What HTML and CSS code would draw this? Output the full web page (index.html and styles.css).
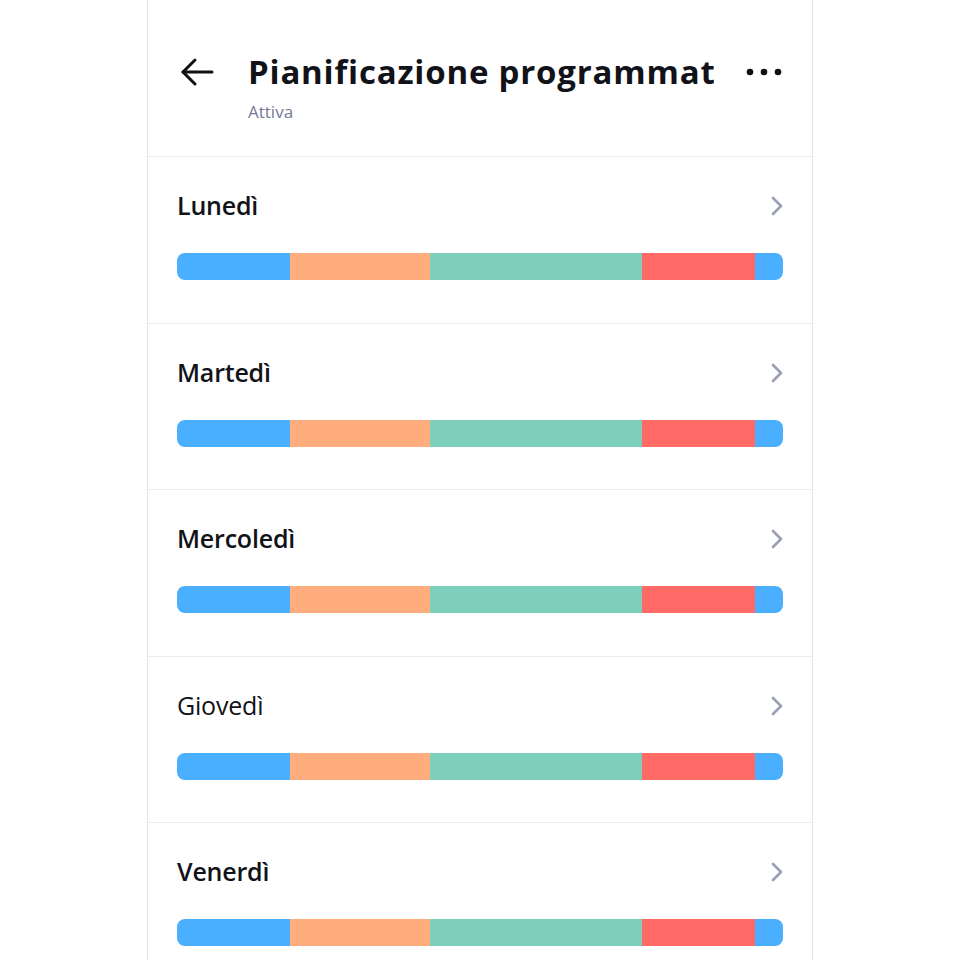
FILE: index.html
```html
<!DOCTYPE html>
<html lang="it">

<head>
  <meta charset="UTF-8">
  <meta name="viewport" content="width=device-width, initial-scale=1.0">
  <title>Pianificazione programmata</title>
  <link rel="stylesheet" href="styles.css">
</head>

<body>
  <div class="panel">
    <div class="header">
      <button class="icon-button back" aria-label="Indietro">
        <svg width="34" height="30" viewBox="0 0 34 30" fill="none" stroke="#111" stroke-width="3" stroke-linecap="round" stroke-linejoin="round">
          <path d="M32 15H3"/>
          <path d="M15 3L3 15l12 12"/>
        </svg>
      </button>
      <div class="title-block">
        <h1 class="title">Pianificazione programmata</h1>
        <div class="status">Attiva</div>
      </div>
      <button class="icon-button more" aria-label="Altro">
        <svg width="36" height="8" viewBox="0 0 36 8" fill="#111">
          <circle cx="4" cy="4" r="3.3"/>
          <circle cx="18" cy="4" r="3.3"/>
          <circle cx="32" cy="4" r="3.3"/>
        </svg>
      </button>
    </div>

    <ul class="day-list">
      <li class="day">
        <div class="day-top">
          <span class="day-name">Lunedì</span>
          <svg class="chevron" width="14" height="22" viewBox="0 0 14 22" fill="none" stroke="#9aa0b4" stroke-width="2.6" stroke-linecap="round" stroke-linejoin="round"><path d="M3 3l8 8-8 8"/></svg>
        </div>
        <div class="bar">
          <span class="seg blue" style="width: 113px"></span>
          <span class="seg orange" style="width: 140px"></span>
          <span class="seg teal" style="width: 212px"></span>
          <span class="seg red" style="width: 113px"></span>
          <span class="seg blue rest"></span>
        </div>
      </li>
      <li class="day">
        <div class="day-top">
          <span class="day-name">Martedì</span>
          <svg class="chevron" width="14" height="22" viewBox="0 0 14 22" fill="none" stroke="#9aa0b4" stroke-width="2.6" stroke-linecap="round" stroke-linejoin="round"><path d="M3 3l8 8-8 8"/></svg>
        </div>
        <div class="bar">
          <span class="seg blue" style="width: 113px"></span>
          <span class="seg orange" style="width: 140px"></span>
          <span class="seg teal" style="width: 212px"></span>
          <span class="seg red" style="width: 113px"></span>
          <span class="seg blue rest"></span>
        </div>
      </li>
      <li class="day">
        <div class="day-top">
          <span class="day-name">Mercoledì</span>
          <svg class="chevron" width="14" height="22" viewBox="0 0 14 22" fill="none" stroke="#9aa0b4" stroke-width="2.6" stroke-linecap="round" stroke-linejoin="round"><path d="M3 3l8 8-8 8"/></svg>
        </div>
        <div class="bar">
          <span class="seg blue" style="width: 113px"></span>
          <span class="seg orange" style="width: 140px"></span>
          <span class="seg teal" style="width: 212px"></span>
          <span class="seg red" style="width: 113px"></span>
          <span class="seg blue rest"></span>
        </div>
      </li>
      <li class="day">
        <div class="day-top">
          <span class="day-name light">Giovedì</span>
          <svg class="chevron" width="14" height="22" viewBox="0 0 14 22" fill="none" stroke="#9aa0b4" stroke-width="2.6" stroke-linecap="round" stroke-linejoin="round"><path d="M3 3l8 8-8 8"/></svg>
        </div>
        <div class="bar">
          <span class="seg blue" style="width: 113px"></span>
          <span class="seg orange" style="width: 140px"></span>
          <span class="seg teal" style="width: 212px"></span>
          <span class="seg red" style="width: 113px"></span>
          <span class="seg blue rest"></span>
        </div>
      </li>
      <li class="day">
        <div class="day-top">
          <span class="day-name">Venerdì</span>
          <svg class="chevron" width="14" height="22" viewBox="0 0 14 22" fill="none" stroke="#9aa0b4" stroke-width="2.6" stroke-linecap="round" stroke-linejoin="round"><path d="M3 3l8 8-8 8"/></svg>
        </div>
        <div class="bar">
          <span class="seg blue" style="width: 113px"></span>
          <span class="seg orange" style="width: 140px"></span>
          <span class="seg teal" style="width: 212px"></span>
          <span class="seg red" style="width: 113px"></span>
          <span class="seg blue rest"></span>
        </div>
      </li>
    </ul>
  </div>
</body>

</html>
```

FILE: styles.css
```css
body {
  margin: 0;
  padding: 0;
  background-color: #ffffff;
  color: #111318;
  font-family: "Open Sans", "Noto Sans", sans-serif;
}

.panel {
  width: 664px;
  height: 960px;
  margin-left: 147px;
  border-left: 1px solid #e4e4ea;
  border-right: 1px solid #e4e4ea;
  overflow: hidden;
}

.header {
  display: flex;
  align-items: flex-start;
  height: 156px;
  padding: 0 30px 0 32px;
  border-bottom: 1px solid #ececf2;
}

.icon-button {
  background: none;
  border: 0px;
  padding: 0;
  display: flex;
  align-items: center;
  justify-content: center;
}

.back {
  margin-top: 57px;
  width: 34px;
  height: 30px;
}

.more {
  margin-top: 68px;
  width: 36px;
  height: 8px;
}

.title-block {
  flex: 1;
  min-width: 0;
  margin-left: 34px;
  margin-right: 32px;
  padding-top: 50px;
}

.title {
  margin: 0px;
  font-size: 33px;
  font-weight: 700;
  line-height: 44px;
  white-space: nowrap;
  overflow: hidden;
  letter-spacing: 0.8px;
}

.status {
  margin-top: 6px;
  font-size: 17px;
  color: #747a98;
}

.day-list {
  list-style: none;
  margin: 0;
  padding: 0;
}

.day {
  padding: 34px 29px 42px 29px;
  border-bottom: 1px solid #ececf2;
  height: 89.5px;
}

.day-top {
  display: flex;
  justify-content: space-between;
  align-items: center;
  height: 28px;
}

.day-name {
  font-size: 25px;
  font-weight: 600;
  letter-spacing: -0.2px;
}

.day-name.light {
  font-weight: 400;
}

.chevron {
  margin-right: -1px;
  margin-top: 2px;
}

.bar {
  display: flex;
  height: 27px;
  margin-top: 34px;
  border-radius: 8px;
  overflow: hidden;
}

.seg {
  display: block;
  height: 100%;
}

.rest {
  flex: 1;
}

.blue {
  background-color: #4aaffe;
}

.orange {
  background-color: #ffad7d;
}

.teal {
  background-color: #7dcebb;
}

.red {
  background-color: #ff6966;
}
```
